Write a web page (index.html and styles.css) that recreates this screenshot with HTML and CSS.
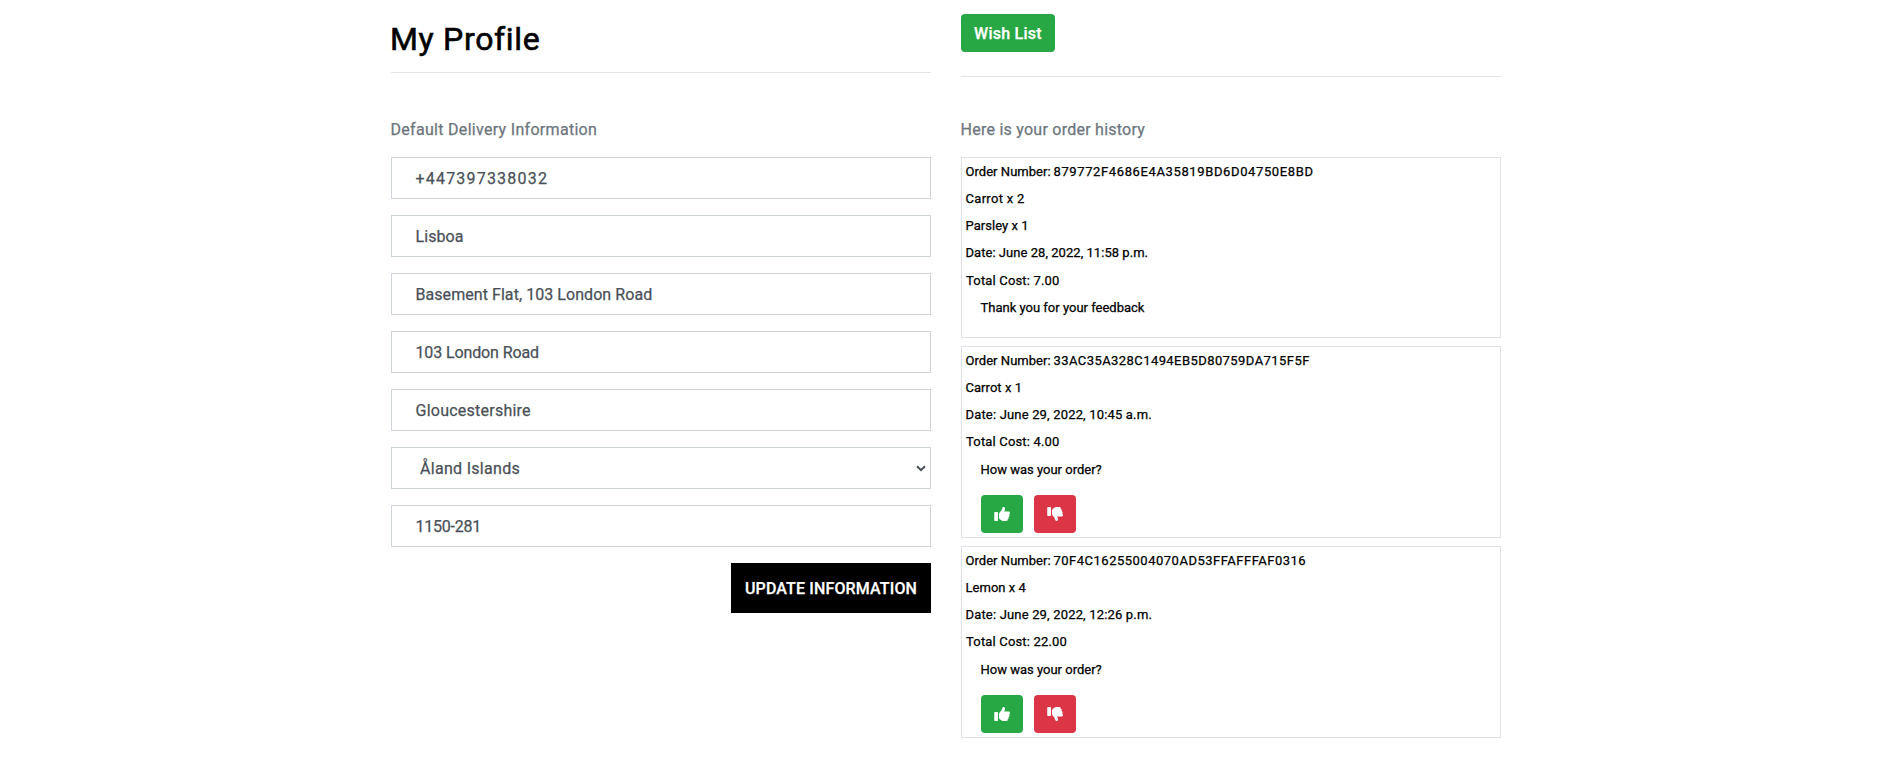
FILE: index.html
```html
<!DOCTYPE html>
<html lang="en">
<head>
<meta charset="utf-8">
<title>My Profile</title>
<link rel="stylesheet" href="styles.css">
</head>
<body>
<svg class="sprite" aria-hidden="true">
  <symbol id="thumb" viewBox="0 0 512 512"><path d="M30 192H106Q128 192 128 214V458Q128 480 106 480H30Q8 480 8 458V214Q8 192 30 192ZM160 250C166 190 242 170 258 86C264 48 284 28 310 33C350 42 362 76 349 116C342 140 333 158 322 176H464C494 176 512 198 512 224C512 244 502 258 486 267C508 290 508 334 467 351C480 384 466 412 439 421C446 454 426 480 392 480H294C270 480 250 470 232 458L196 432C174 416 160 390 160 358Z"/></symbol>
</svg>
<main class="container">
  <section class="profile">
    <h1 class="title">My Profile</h1>
    <hr class="rule">
    <p class="caption caption-delivery">Default Delivery Information</p>
    <form class="form">
      <div class="field phone">+447397338032</div>
      <div class="field">Lisboa</div>
      <div class="field">Basement Flat, 103 London Road</div>
      <div class="field road">103 London Road</div>
      <div class="field county">Gloucestershire</div>
      <div class="field country">Åland Islands
        <svg class="chevron" viewBox="0 0 10 7"><path d="M1 1.2 5 5.2 9 1.2"/></svg>
      </div>
      <div class="field postcode">1150-281</div>
      <button class="update" type="button">UPDATE INFORMATION</button>
    </form>
  </section>
  <section class="history">
    <a class="btn success wish">Wish List</a>
    <hr class="rule">
    <p class="caption caption-history">Here is your order history</p>
    <div class="orders">
      <article class="order order-rated">
        <p>Order Number: <span class="hash hash-a">879772F4686E4A35819BD6D04750E8BD</span></p>
        <p class="item-wide">Carrot x 2</p>
        <p>Parsley x 1</p>
        <p>Date: June 28, 2022, 11:58 p.m.</p>
        <p class="total">Total Cost: 7.00</p>
        <p class="feedback">Thank you for your feedback</p>
      </article>
      <article class="order">
        <p>Order Number: <span class="hash hash-b">33AC35A328C1494EB5D80759DA715F5F</span></p>
        <p>Carrot x 1</p>
        <p class="date">Date: June 29, 2022, 10:45 a.m.</p>
        <p class="total">Total Cost: 4.00</p>
        <p class="feedback">How was your order?</p>
        <div class="votes">
          <button class="btn success vote" type="button"><svg class="icon"><use href="#thumb"/></svg></button>
          <button class="btn danger vote" type="button"><svg class="icon down"><use href="#thumb"/></svg></button>
        </div>
      </article>
      <article class="order">
        <p>Order Number: <span class="hash hash-c">70F4C16255004070AD53FFAFFFAF0316</span></p>
        <p>Lemon x 4</p>
        <p class="date">Date: June 29, 2022, 12:26 p.m.</p>
        <p class="total">Total Cost: 22.00</p>
        <p class="feedback">How was your order?</p>
        <div class="votes">
          <button class="btn success vote" type="button"><svg class="icon"><use href="#thumb"/></svg></button>
          <button class="btn danger vote" type="button"><svg class="icon down"><use href="#thumb"/></svg></button>
        </div>
      </article>
    </div>
  </section>
</main>
</body>
</html>
```
FILE: styles.css
```css
* { box-sizing: border-box; }
body {
  margin: 0;
  background: #fff;
  color: #000;
  font: 400 16px/24px Roboto, "Liberation Sans", sans-serif;
  -webkit-text-stroke: .25px;
}
p, h1 { margin: 0; }
.sprite { display: none; }
.container {
  display: grid;
  grid-template-columns: 540px 540px;
  column-gap: 30px;
  width: 1110px;
  margin-left: 391px;
}
.title {
  padding-top: 20px;
  font-size: 32px;
  line-height: 38px;
  font-weight: 400;
  letter-spacing: .68px;
  text-indent: -1px;
  -webkit-text-stroke: .6px;
}
.rule {
  height: 1px;
  margin: 0;
  border: 0;
  background: #e5e5e5;
}
.profile .rule { margin-top: 14px; }
.history .rule { margin-top: 24px; }
.caption { color: #6c757d; text-indent: -.5px; }
.caption-delivery { margin: 45px 0 15px; letter-spacing: .3px; }
.caption-history { margin: 41px 0 15px; letter-spacing: .25px; }
.form { display: flex; flex-direction: column; gap: 16px; }
.field {
  height: 42px;
  padding: 9px 24px 7px 23.5px;
  border: 1px solid #ced4da;
  color: #495057;
  letter-spacing: .06px;
}
.phone { letter-spacing: 1.2px; }
.road { letter-spacing: -.12px; }
.county { letter-spacing: .24px; }
.postcode { letter-spacing: -.25px; }
.country {
  display: flex;
  align-items: center;
  justify-content: space-between;
  padding: 1px 4px 0 28px;
  letter-spacing: .3px;
}
.chevron {
  width: 10px;
  height: 7px;
  fill: none;
  stroke: #495057;
  stroke-width: 2;
}
.update {
  align-self: flex-end;
  width: 200px;
  height: 50px;
  padding: 2px 0 0;
  border: 0;
  background: #000;
  color: #fff;
  font: 500 16px/24px Roboto, sans-serif;
  letter-spacing: .14px;
}
.btn {
  display: flex;
  align-items: center;
  justify-content: center;
  height: 38px;
  padding: 0;
  border: 0;
  border-radius: 4px;
  color: #fff;
}
.success { background: #28a745; }
.danger { background: #dc3545; }
.wish {
  width: 94px;
  margin-top: 14px;
  padding-top: 2px;
  font-weight: 500;
  letter-spacing: .25px;
}
.orders { display: flex; flex-direction: column; gap: 8px; }
.order {
  height: 192px;
  padding: 0 3.5px;
  border: 1px solid #dee2e6;
  font-size: 13px;
  line-height: 27.1px;
  letter-spacing: .04px;
}
.order-rated { height: 181px; }
.hash { margin-left: -.5px; }
.hash-a { letter-spacing: .62px; }
.hash-b { letter-spacing: .43px; }
.hash-c { letter-spacing: .5px; }
.item-wide { letter-spacing: .3px; }
.date { letter-spacing: .17px; }
.total { padding-left: .5px; letter-spacing: .17px; }
.feedback { padding: 1px 0 0 15px; letter-spacing: 0; }
.order-rated .total { padding-top: 1px; }
.order-rated .feedback { padding-top: 0; }
.votes { display: flex; gap: 11px; padding: 11.5px 0 0 15.5px; }
.vote { width: 42px; }
.icon { width: 16px; height: 16px; fill: #fff; }
.down { transform: scaleY(-1); }
```
